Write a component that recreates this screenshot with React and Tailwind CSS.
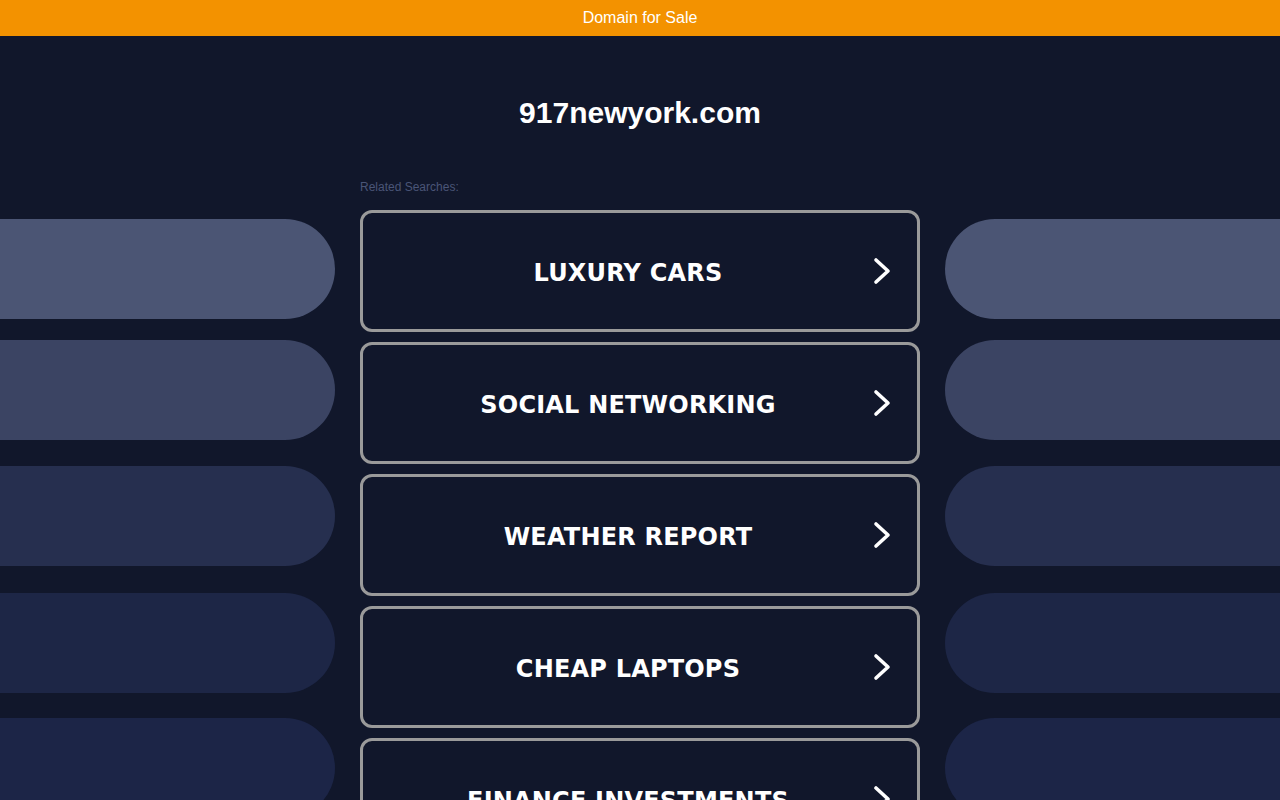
import React from 'react';

const searches = ['LUXURY CARS', 'SOCIAL NETWORKING', 'WEATHER REPORT', 'CHEAP LAPTOPS', 'FINANCE INVESTMENTS'];

// decorative side pills: [margin-top, colour]
const pills = [
  ['mt-[43px]', 'bg-[#4b5574]'],
  ['mt-[21px]', 'bg-[#3b4463]'],
  ['mt-[26px]', 'bg-[#262f4f]'],
  ['mt-[27px]', 'bg-[#1d2646]'],
  ['mt-[25px]', 'bg-[#1c2547]'],
];

const Chevron = () => (
  <svg width="24" height="30" viewBox="0 0 24 30" fill="none">
    <polyline points="6,4 18,15 6,26" stroke="white" strokeWidth="3.6" strokeLinecap="round" strokeLinejoin="round" />
  </svg>
);

const SearchButton = ({ label }) => (
  <a href="#" className="relative flex h-[122px] items-center justify-center rounded-[12px] border-[3px] border-[#9a9a9a] pr-[24px]">
    <span className="pt-[4px] text-[24px] font-bold tracking-[0.2px] text-white" style={{ fontFamily: '"DejaVu Sans", Verdana, sans-serif' }}>
      {label}
    </span>
    <span className="absolute right-[23px] top-1/2 -translate-y-1/2">
      <Chevron />
    </span>
  </a>
);

export default function App() {
  return (
    <div className="h-[800px] overflow-hidden bg-[#11172b]" style={{ fontFamily: '"Liberation Sans", Arial, sans-serif' }}>
      <div className="flex h-[36px] items-center justify-center bg-[#f39200] text-[16px] text-white">Domain for Sale</div>

      <h1 className="mt-[60px] text-center text-[30px] font-bold leading-[34px] text-white">917newyork.com</h1>

      <div className="mt-[46px] flex">
        <div className="flex w-[335px] flex-none flex-col">
          {pills.map(([mt, bg], i) => (
            <div key={i} className={`${mt} ${bg} h-[100px] rounded-r-full`} />
          ))}
        </div>

        <div className="mx-[25px] flex w-[560px] flex-none flex-col">
          <div className="h-[20px] pt-[1px] text-[12px] leading-[20px] text-[#4a5577]">Related Searches:</div>
          <div className="mt-[14px] flex flex-col gap-[10px]">
            {searches.map((s) => (
              <SearchButton key={s} label={s} />
            ))}
          </div>
        </div>

        <div className="flex flex-1 flex-col">
          {pills.map(([mt, bg], i) => (
            <div key={i} className={`${mt} ${bg} h-[100px] rounded-l-full`} />
          ))}
        </div>
      </div>
    </div>
  );
}
